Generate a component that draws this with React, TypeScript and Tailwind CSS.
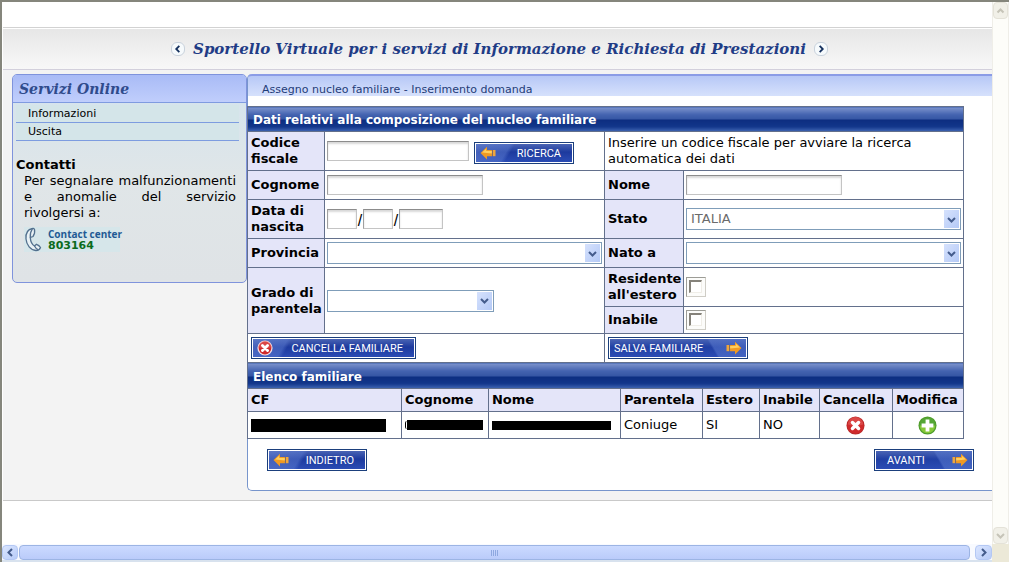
import React from 'react';
import clsx from 'clsx';

const FONT = "font-['Verdana','DejaVu_Sans',sans-serif]";
const SERIF = "font-['DejaVu_Serif',serif] font-bold italic";

const Chevron: React.FC<{ dir: 'up' | 'down' | 'left' | 'right'; className?: string; size?: number }> = ({ dir, className, size = 9 }) => {
  const d = {
    up: 'M1.5 6.5 L4.5 3.5 L7.5 6.5',
    down: 'M1 3 L4.5 6.5 L8 3',
    left: 'M6 1 L2.5 4.5 L6 8',
    right: 'M3 1 L6.5 4.5 L3 8',
  }[dir];
  return (
    <svg width={size} height={size} viewBox="0 0 9 9" fill="none" stroke="currentColor" strokeWidth="2" className={className} aria-hidden="true">
      <path d={d} />
    </svg>
  );
};

const Arrow: React.FC<{ flip?: boolean }> = ({ flip }) => (
  <svg width="16" height="14" viewBox="0 0 16 14" className={clsx('shrink-0', flip && '-scale-x-100')} aria-hidden="true">
    <path d="M0.5 7 L7 0.8 V4 H12 V10.2 H7 V13.4 Z" fill="#f09a22" />
    <path d="M2 6.6 L6.2 2.8 V5 H12 V7.4 Z" fill="#ffcf5c" />
    <path d="M12.8 4 H15.5 V10.2 H12.8 Z" fill="#f0a63c" />
    <path d="M12.4 4 V10.2" stroke="#8a6a50" strokeWidth="0.8" />
  </svg>
);

const Cross: React.FC<{ size: number; ring?: boolean }> = ({ size, ring }) => (
  <svg width={size} height={size} viewBox="0 0 20 20" className="shrink-0" aria-hidden="true">
    <circle cx="10" cy="10" r="9.5" fill={ring ? '#f1dfe6' : '#b92a2a'} />
    <circle cx="10" cy="10" r={ring ? 8 : 8.6} fill="#cf2a2c" />
    <path d="M2 9 A8 8 0 0 1 18 9 Q10 12 2 9Z" fill="#e86a66" opacity=".45" />
    <path d="M6.8 6.8 L13.2 13.2 M13.2 6.8 L6.8 13.2" stroke="#fff" strokeWidth="3.6" strokeLinecap="round" />
  </svg>
);

const Plus: React.FC = () => (
  <svg width="19" height="19" viewBox="0 0 20 20" aria-hidden="true">
    <circle cx="10" cy="10" r="9.5" fill="#4f9c2a" />
    <circle cx="10" cy="10" r="8.5" fill="#55a636" />
    <path d="M1.8 10 A8.2 8.2 0 0 0 18.2 10Z" fill="#86c838" />
    <path d="M10 3.8 V16.2 M3.8 10 H16.2" stroke="#fff" strokeWidth="4" />
  </svg>
);

const ActionButton: React.FC<{ label: string; icon: React.ReactNode; iconRight?: boolean; className?: string }> = ({ label, icon, iconRight, className }) => (
  <button type="button" className={clsx('h-[22px] border border-[#1b3f7c] bg-white p-px align-middle', className)}>
    <span
      className={clsx(
        "flex h-full items-center font-['Roboto',sans-serif] text-[11px] leading-none text-white",
        iconRight
          ? 'bg-[linear-gradient(60deg,transparent_calc(100%_-_34px),#5b7bd080_calc(100%_-_32px)),linear-gradient(#4a64b4,#2140a4_45%,#2b4cb4)] pr-1'
          : 'bg-[linear-gradient(120deg,#6f8bd880_0,#5b7bd080_30px,transparent_34px),linear-gradient(#4a64b4,#1d3a9e_45%,#2b4cb4)] pl-1'
      )}
    >
      {!iconRight && icon}
      <span className="flex-1 whitespace-nowrap">{label}</span>
      {iconRight && icon}
    </span>
  </button>
);

const TextBox: React.FC<{ id: string; className: string; label?: string }> = ({ id, className, label }) => (
  <input
    id={id}
    type="text"
    aria-label={label}
    className={clsx('block h-5 border border-[#c4c4c4] border-l-[#a0a0a0] border-t-[#8c8c8c] bg-white px-1 shadow-[inset_0_2px_2px_#d9d9d9]', className)}
  />
);

const DropDown: React.FC<{ id: string; className?: string; value?: string; disabled?: boolean }> = ({ id, className, value = '', disabled }) => (
  <div className={clsx('relative', className)}>
    <select id={id} disabled={disabled} defaultValue={value} className="block h-[22px] w-full appearance-none border border-[#7f9db9] bg-white pl-1 text-[13px] leading-4 text-[#6b6b6b] opacity-100">
      <option value={value}>{value}</option>
    </select>
    <span className="pointer-events-none absolute right-0.5 top-0.5 flex h-[18px] w-[15px] items-center justify-center bg-linear-to-br from-[#d6e2fd] to-[#b4c9f6] text-[#445c8c]">
      <Chevron dir="down" />
    </span>
  </div>
);

const CheckBox: React.FC<{ id: string }> = ({ id }) => (
  <input
    id={id}
    type="checkbox"
    className="block size-5 appearance-none border border-[#cfcdc6] border-l-[#9c9c96] border-t-[#9c9c96] bg-[#fcfcfa] p-0.5 before:block before:size-[13px] before:border before:border-l-2 before:border-t-2 before:border-[#f0eee8] before:border-l-[#85827a] before:border-t-[#85827a] before:bg-white checked:before:bg-[#445c8c]"
  />
);

const line = 'border border-[#63708c]';
const cell = `${line} px-[3px] py-0 text-left`;
const field = `${line} px-0.5 py-0 text-left`;
const head = `${cell} bg-[#e4e5f9] font-bold`;
const bar = `${line} bg-[linear-gradient(#7c93cc,#4463b0_30%,#3556a4_50%,#0c2d80_51%,#12368a_80%,#4066b4)] px-[5px] pt-0.5 text-left text-xs leading-4 font-bold text-white`;

const scrollArrow = 'flex items-center justify-center rounded-sm border border-[#b4c8f4] bg-linear-to-br from-[#dbe6ff] to-[#b7cbf8] text-[#445c8c]';
const scrollArrowOff = 'flex h-[17px] w-[15px] items-center justify-center rounded-sm border border-[#e4e2d8] bg-[#f1f0e8] text-[#c6c4b8]';

const TitleArrow: React.FC<{ dir: 'left' | 'right' }> = ({ dir }) => (
  <button type="button" aria-label={dir === 'left' ? 'Precedente' : 'Successivo'} className="flex size-[14px] items-center justify-center rounded-md border border-[#c9d2dc] bg-[#f6fafc] text-[#14305e]">
    <Chevron dir={dir} size={8} />
  </button>
);

const Sidebar: React.FC = () => (
  <aside className="h-[209px] w-[235px] shrink-0 rounded-[5px] border border-[#7f93dc] bg-linear-to-b from-[#d3e3ee] via-[#e0e6e8] to-[#dfe3e6]">
    <h2 className={clsx('h-7 rounded-t border-b border-[#7f9be0] bg-linear-to-b from-[#a9bbf6] to-[#c0cefc] pl-1.5 text-sm leading-7 text-[#2f4b8c]', SERIF)}>
      Servizi Online
    </h2>
    <nav className="ml-[3px] mr-[7px] mt-0.5 text-[11px] leading-4">
      {['Informazioni', 'Uscita'].map(item => (
        <a key={item} href="#" className="block h-[18px] border-b border-[#7d9ce0] bg-[#d4e5e9] pl-3 pt-px">{item}</a>
      ))}
    </nav>
    <div className="pl-[3px] pr-2.5 pt-4 text-[13px] leading-4">
      <h3 className="font-bold">Contatti</h3>
      <p className="pl-2 text-justify">Per segnalare malfunzionamenti e anomalie del servizio rivolgersi a:</p>
      <div className="ml-2 mt-1.5 flex w-24 items-center gap-1.5 bg-[#d6e6ea]">
        <svg width="18" height="25" viewBox="0 0 18 25" className="shrink-0" fill="none" stroke="#52708e" strokeWidth="1.3" aria-hidden="true">
          <path d="M8.5 1.5 C3.5 2.5 1.5 7 2 12 C2.5 18 6.5 23 12 23.5 C14 23.5 16 22 16.5 20.5 C15.5 18.8 14 17.8 12.5 17.3 L10.5 19 C8 17.5 6.5 14.5 6.3 10.5 L9 9.5 C10.5 7.5 11 5 10.5 2.5 C10 1.5 9.3 1.3 8.5 1.5Z" fill="#e9f1f5" />
          <path d="M6.3 10.5 C5.8 7 7 4 8.5 1.5 M10.5 19 C11.5 21 12.5 22.5 14.5 22.8" />
        </svg>
        <div className="whitespace-nowrap font-['Open_Sans',sans-serif] text-[10px] font-bold leading-3 text-[#1f5a94]">
          Contact center
          <div className="font-['DejaVu_Sans',sans-serif] text-[11px] leading-3 text-[#0b6b1c]">803164</div>
        </div>
      </div>
    </div>
  </aside>
);

const FamilyForm: React.FC = () => (
  <table className="w-full table-fixed border-collapse">
    <colgroup>
      <col className="w-[77px]" />
      <col />
      <col className="w-[79px]" />
      <col />
    </colgroup>
    <tbody>
      <tr className="h-[25px]">
        <th colSpan={4} className={bar}>Dati relativi alla composizione del nucleo familiare</th>
      </tr>
      <tr className="h-[39px]">
        <th className={head}><label htmlFor="cf">Codice fiscale</label></th>
        <td className={field}>
          <div className="flex items-center gap-[5px]">
            <TextBox id="cf" className="w-[142px]" />
            <ActionButton label="RICERCA" icon={<Arrow />} className="mt-1 w-[100px] text-right [&>span]:pr-[11px]" />
          </div>
        </td>
        <td colSpan={2} className={cell}>Inserire un codice fiscale per avviare la ricerca automatica dei dati</td>
      </tr>
      <tr className="h-[29px]">
        <th className={head}><label htmlFor="cognome">Cognome</label></th>
        <td className={field}><TextBox id="cognome" className="w-[156px]" /></td>
        <th className={head}><label htmlFor="nome">Nome</label></th>
        <td className={field}><TextBox id="nome" className="w-[156px]" /></td>
      </tr>
      <tr className="h-[39px]">
        <th className={head}><label htmlFor="giorno">Data di nascita</label></th>
        <td className={field}>
          <div className="flex items-end font-['Liberation_Sans',sans-serif] text-base leading-4">
            <TextBox id="giorno" className="w-[30px]" />
            <span className="w-1.5 text-center">/</span>
            <TextBox id="mese" label="Mese" className="w-[30px]" />
            <span className="w-1.5 text-center">/</span>
            <TextBox id="anno" label="Anno" className="w-11" />
          </div>
        </td>
        <th className={head}><label htmlFor="stato">Stato</label></th>
        <td className={field}><DropDown id="stato" value="ITALIA" disabled /></td>
      </tr>
      <tr className="h-[29px]">
        <th className={head}><label htmlFor="provincia">Provincia</label></th>
        <td className={field}><DropDown id="provincia" /></td>
        <th className={head}><label htmlFor="nato">Nato a</label></th>
        <td className={field}><DropDown id="nato" /></td>
      </tr>
      <tr className="h-[39px]">
        <th rowSpan={2} className={head}><label htmlFor="grado">Grado di parentela</label></th>
        <td rowSpan={2} className={field}><DropDown id="grado" className="w-[167px]" /></td>
        <th className={head}><label htmlFor="residente">Residente all'estero</label></th>
        <td className={field}><CheckBox id="residente" /></td>
      </tr>
      <tr className="h-[27px]">
        <th className={head}><label htmlFor="inabile">Inabile</label></th>
        <td className={field}><CheckBox id="inabile" /></td>
      </tr>
      <tr className="h-[29px]">
        <td colSpan={2} className={cell}><ActionButton label="CANCELLA FAMILIARE" icon={<Cross size={16} ring />} className="w-[165px] text-right [&>span]:pr-[11px]" /></td>
        <td colSpan={2} className={cell}><ActionButton label="SALVA FAMILIARE" icon={<Arrow flip />} iconRight className="w-[140px] text-left [&>span]:pl-1" /></td>
      </tr>
    </tbody>
  </table>
);

const FamilyList: React.FC = () => (
  <table className="-mt-px w-full table-fixed border-collapse">
    <colgroup>
      <col />
      <col className="w-[87px]" />
      <col className="w-[132px]" />
      <col className="w-[82px]" />
      <col className="w-[57px]" />
      <col className="w-[60px]" />
      <col className="w-[73px]" />
      <col className="w-[71px]" />
    </colgroup>
    <tbody>
      <tr className="h-[26px]">
        <th colSpan={8} className={bar}>Elenco familiare</th>
      </tr>
      <tr className="h-[23px]">
        {['CF', 'Cognome', 'Nome', 'Parentela', 'Estero', 'Inabile', 'Cancella', 'Modifica'].map(h => (
          <th key={h} className={head}>{h}</th>
        ))}
      </tr>
      <tr className="h-[27px]">
        <td className={cell}><div className="h-[13px] w-[135px] bg-black" /></td>
        <td className={cell}>
          <div className="flex items-center">
            <span className="h-2 w-0.5 rounded-l-full border-l border-black" />
            <span className="h-2.5 w-[76px] bg-black" />
          </div>
        </td>
        <td className={cell}><div className="h-[9px] w-[119px] bg-black" /></td>
        <td className={cell}>Coniuge</td>
        <td className={cell}>SI</td>
        <td className={cell}>NO</td>
        <td className={cell}>
          <button type="button" aria-label="Cancella" className="mx-auto block"><Cross size={19} /></button>
        </td>
        <td className={cell}>
          <button type="button" aria-label="Modifica" className="mx-auto block"><Plus /></button>
        </td>
      </tr>
    </tbody>
  </table>
);

const App: React.FC = () => (
  <div className={clsx('flex h-screen flex-col overflow-hidden border-l-2 border-t-2 border-[#85867c] bg-white text-[13px] leading-4 text-black', FONT)}>
    <div className="flex min-h-0 flex-1">
      <main className="min-w-0 flex-1 overflow-hidden pl-px pt-[25px]">
        <div className="border-b border-[#c9c9c9] bg-[#f3f3f3] pb-[9px]">
          {/* Title band */}
          <header className="flex h-[43px] items-center justify-center gap-2 border-y border-b-[#d3d0dc] border-t-[#d2d2d2] bg-linear-to-b from-[#e6e6e6] to-[#f8f8f8] pl-1 shadow-[inset_0_1px_#fff]">
            <TitleArrow dir="left" />
            <h1 className={clsx('whitespace-nowrap text-[15px] text-[#1f3c86]', SERIF)}>
              Sportello Virtuale per i servizi di Informazione e Richiesta di Prestazioni
            </h1>
            <TitleArrow dir="right" />
          </header>

          <div className="flex items-start pl-[9px] pt-1">
            <Sidebar />
            {/* Panel */}
            <section className="h-[417px] min-w-0 flex-1 rounded-bl-[5px] rounded-tl-[5px] border-b border-l border-[#7795cc] bg-white">
              <div className="h-[22px] rounded-tl border-t-2 border-[#8b9ce6] bg-linear-to-b from-[#b7c8f6] to-[#d6e1fc] pl-3.5 text-[11px] leading-7 text-[#1f3c78]">
                Assegno nucleo familiare - Inserimento domanda
              </div>
              <div className="-ml-px mr-7 mt-2.5">
                <FamilyForm />
                <FamilyList />
              </div>
              <div className="mt-2.5 flex justify-between pl-[19px] pr-[18px]">
                <ActionButton label="INDIETRO" icon={<Arrow />} className="w-[100px] text-right [&>span]:pr-[11px]" />
                <ActionButton label="AVANTI" icon={<Arrow flip />} iconRight className="w-[100px] text-left [&>span]:pl-[11px]" />
              </div>
            </section>
          </div>
        </div>
      </main>

      {/* Vertical scroll bar */}
      <div className="flex w-[17px] shrink-0 flex-col items-center justify-between border-x border-[#efeee8] bg-[#fdfdf9]">
        <button type="button" aria-label="Su" className={scrollArrowOff}><Chevron dir="up" /></button>
        <button type="button" aria-label="Giù" className={scrollArrowOff}><Chevron dir="down" /></button>
      </div>
    </div>

    {/* Horizontal scroll bar */}
    <div className="flex h-[18px] shrink-0 bg-[#ece9d8]">
      <div className="flex flex-1 gap-px border-b-2 border-[#d8e2ee] bg-[#f8faff] pt-px">
        <button type="button" aria-label="Sinistra" className={clsx(scrollArrow, 'w-4')}><Chevron dir="left" /></button>
        <div className="flex flex-1 items-center justify-center gap-px rounded-sm border border-[#9cb4e4] bg-linear-to-b from-[#cbdaff] to-[#bacbfa]">
          {[0, 1, 2, 3].map(i => <span key={i} className="h-1.5 w-px bg-[#8ea8e0]" />)}
        </div>
        <button type="button" aria-label="Destra" className={clsx(scrollArrow, 'ml-1 w-[17px]')}><Chevron dir="right" /></button>
      </div>
      <div className="w-[17px]" />
    </div>
  </div>
);

export default App;
